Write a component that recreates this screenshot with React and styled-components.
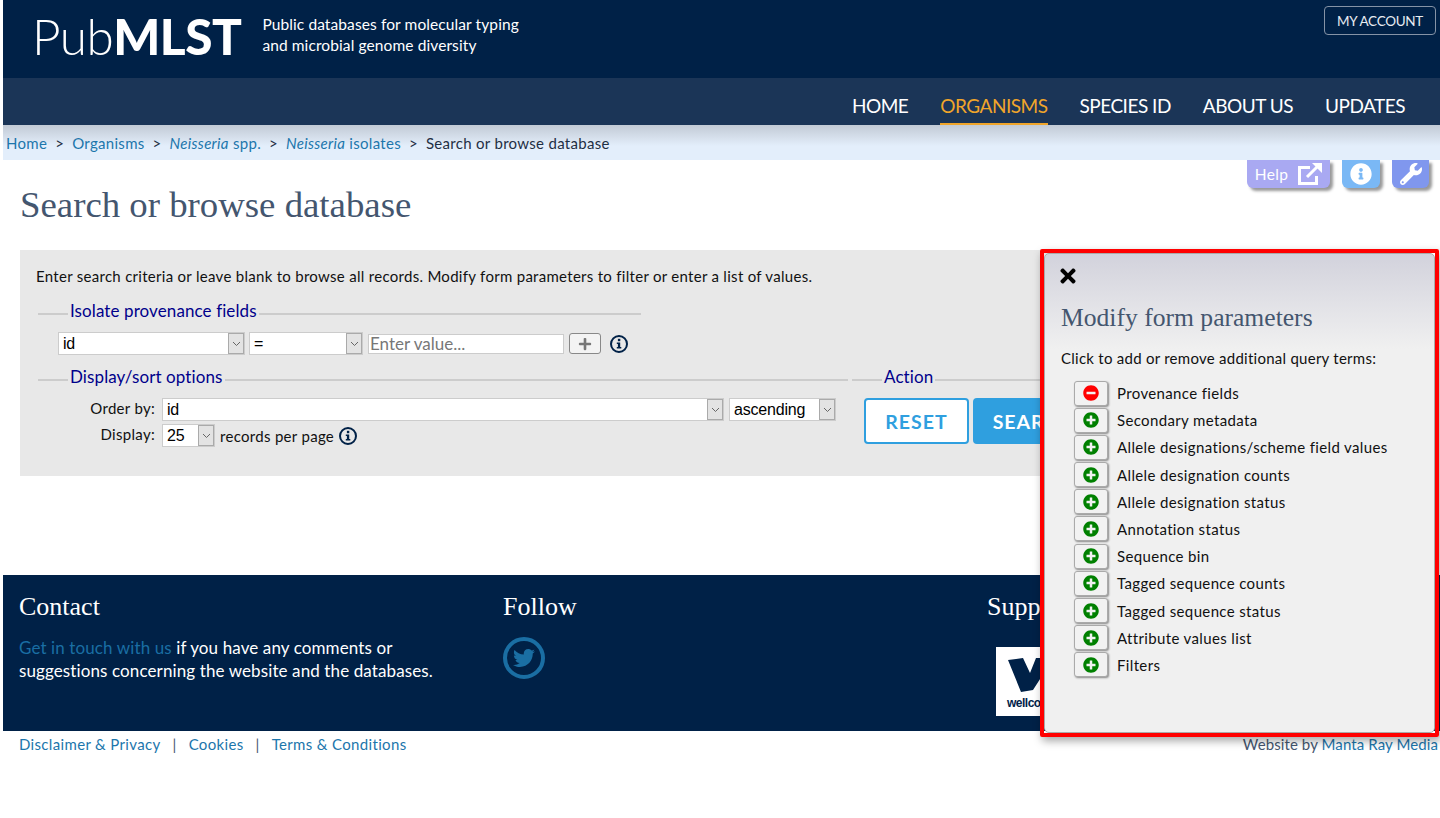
import React from 'react';
import styled, { createGlobalStyle } from 'styled-components';
import { FaInfoCircle, FaWrench, FaPlus, FaPlusCircle, FaMinusCircle, FaTimes, FaTwitter } from 'react-icons/fa';

const sans = `Lato, "Noto Sans", sans-serif`;
const serif = `"Liberation Serif", serif`;

const Global = createGlobalStyle`
  html, body { margin: 0; padding: 0; background: #fff; }
  body { font-family: ${sans}; font-size: 15px; letter-spacing: .3px; color: #111; overflow: hidden; }
  * { box-sizing: border-box; }
  a { text-decoration: none; color: #1c76ac; }
`;

const Page = styled.div`
  position: relative;
  width: 1440px;
  height: 818px;
  overflow: hidden;
  padding-left: 3px;
`;
const Masthead = styled.header`
  height: 78px;
  background: #002147;
  display: flex;
  justify-content: space-between;
  padding: 6px 4px 0 29px;
`;
const Brand = styled.div`
  display: flex;
  align-items: flex-start;
  gap: 21px;
`;
const Logo = styled.div`
  font-size: 49.5px;
  line-height: 60px;
  color: #fff;
  font-weight: 300;
  letter-spacing: -0.5px;
  b { font-weight: 900; letter-spacing: -0.5px; }
`;
const Tagline = styled.div`
  color: #fff;
  font-size: 15.5px;
  letter-spacing: .1px;
  line-height: 21px;
  padding-top: 8px;
`;
const AccountButton = styled.a`
  height: 29px;
  width: 112px;
  border: 1px solid #8593a6;
  border-radius: 4px;
  color: #e8ecf2;
  font-size: 13.5px;
  letter-spacing: -.3px;
  display: flex;
  align-items: center;
  justify-content: center;
`;
const Nav = styled.nav`
  height: 47px;
  background: #1b3557;
  display: flex;
  justify-content: flex-end;
  gap: 32px;
  padding-right: 35px;
`;
const NavItem = styled.a`
  color: ${p => (p.$active ? '#f0a52a' : '#fff')};
  font-size: 19px;
  letter-spacing: -.5px;
  line-height: 35px;
  padding-top: 10px;
  height: 47px;
  border-bottom: 2px solid ${p => (p.$active ? '#f0a52a' : 'transparent')};
`;
const Crumbs = styled.div`
  height: 35px;
  background: linear-gradient(#c2cad5, #e3eefb 60%);
  padding-left: 3px;
  font-size: 15px;
  letter-spacing: .3px;
  line-height: 37px;
  color: #1f2f44;
  display: flex;
  gap: 8px;
  i { font-style: italic; }
`;
const TitleRow = styled.div`
  display: flex;
  justify-content: space-between;
  align-items: flex-start;
  padding: 0 11px 0 17px;
  height: 90px;
`;
const Title = styled.h1`
  font-family: ${serif};
  font-weight: 400;
  font-size: 36.8px;
  letter-spacing: 0;
  line-height: 40px;
  color: #44566f;
  margin: 25px 0 0;
`;
const Tabs = styled.div`
  display: flex;
  gap: 12px;
`;
const Tab = styled.a`
  height: 28px;
  background: ${p => p.$bg};
  color: #fff;
  border-radius: 0 0 6px 6px;
  box-shadow: 3px 3px 3px #999;
  display: flex;
  align-items: center;
  justify-content: center;
  gap: 10px;
  font-size: 15.5px;
  width: ${p => p.$w}px;
`;
const FormBox = styled.section`
  margin: 0 0 0 17px;
  width: 1300px;
  height: 226px;
  background: #e8e8e8;
  padding: 17px 15px 0 16px;
`;
const Intro = styled.p`
  margin: 0 0 16px;
  font-size: 15px;
  letter-spacing: .29px;
  line-height: 18px;
  color: #111;
`;
const Group = styled.fieldset`
  margin: 0;
  padding: 0;
  border: 0;
  border-top: 2px solid #ccc;
  min-width: 0;
  width: ${p => p.$w}px;
  legend {
    margin-left: 30px;
    padding: 0 2px 6px;
    color: #00008b;
    font-size: 17px;
    letter-spacing: .1px;
    line-height: 20px;
  }
`;
const Indent = styled.div`
  display: flex;
  align-items: center;
  gap: 4px;
  padding: 5px 0 12px 20px;
  height: 40px;
`;
const FieldRow = styled.div`
  display: flex;
  gap: 4px;
  margin-left: 2px;
`;
const SelectBox = styled.div`
  width: ${p => p.$w}px;
  height: 23px;
  background: #fff;
  border: 1px solid #ccc;
  display: flex;
  justify-content: space-between;
  font-family: "Liberation Sans", sans-serif;
  font-size: 16px;
  letter-spacing: -.2px;
  line-height: 21px;
  padding-left: 4px;
  color: #000;
`;
const SelectArrow = styled.span`
  width: 16px;
  height: 21px;
  border: 1px solid #aaa;
  background: #e3e3e3;
  display: flex;
  align-items: center;
  justify-content: center;
`;
const Chevron = () => (
  <svg width="9" height="6" viewBox="0 0 9 6"><path d="M1 1l3.5 3.5L8 1" fill="none" stroke="#666" strokeWidth="1" /></svg>
);
const Select = ({ w, children }) => (
  <SelectBox $w={w}>
    {children}
    <SelectArrow><Chevron /></SelectArrow>
  </SelectBox>
);
const ValueInput = styled.input`
  width: 196px;
  height: 20px;
  margin-left: 1px;
  border: 1px solid #ccc;
  background: #fff;
  padding: 0 1px;
  font-family: ${sans};
  font-size: 17px;
  letter-spacing: 0;
  &::placeholder { color: #777; opacity: 1; }
`;
const AddButton = styled.span`
  width: 32px;
  height: 21px;
  margin-left: 1px;
  background: #f3f3f3;
  border: 1px solid #888;
  border-radius: 3px;
  display: flex;
  align-items: center;
  justify-content: center;
  color: #777;
  font-size: 14px;
`;
const InfoMark = styled.span`
  display: inline-flex;
  margin-left: ${p => p.$ml || 0}px;
`;
const Info = ({ ml }) => (
  <InfoMark $ml={ml}>
    <svg width="18" height="18" viewBox="0 0 18 18">
      <circle cx="9" cy="9" r="8" fill="none" stroke="#002147" strokeWidth="2" />
      <rect x="7.9" y="3.8" width="2.4" height="2.4" fill="#002147" />
      <path d="M6.8 7.4h3.4v4.7h1.1v1.5H6.8v-1.5h1.1V8.9H6.8z" fill="#002147" />
    </svg>
  </InfoMark>
);
const OptionGrid = styled.div`
  display: grid;
  grid-template-columns: 115px auto;
  column-gap: 7px;
  row-gap: 3px;
  padding-top: 5px;
  margin-left: 2px;
`;
const OptLabel = styled.label`
  text-align: right;
  line-height: 20px;
  font-size: 15px;
`;
const OptRow = styled.div`
  display: flex;
  align-items: center;
  gap: 5px;
  font-size: 15px;
`;
const Actions = styled.div`
  display: flex;
  gap: 4px;
  padding: 5px 0 0 12px;
`;
const ActionButton = styled.span`
  height: 46px;
  width: ${p => p.$w}px;
  flex: none;
  border: 2px solid #2f9fdf;
  border-radius: 4px;
  background: ${p => (p.$fill ? '#2f9fdf' : '#fff')};
  color: ${p => (p.$fill ? '#fff' : '#2f9fdf')};
  font-size: 19.5px;
  font-weight: 700;
  letter-spacing: 1px;
  display: flex;
  align-items: center;
  justify-content: center;
`;
const Footer = styled.footer`
  margin-top: 99px;
  height: 156px;
  background: #002147;
  color: #fff;
  display: grid;
  grid-template-columns: 484px 484px 1fr;
  padding: 17px 0 0 16px;
`;
const FootHead = styled.h2`
  font-family: ${serif};
  font-weight: 400;
  font-size: 26px;
  letter-spacing: 0;
  line-height: 30px;
  margin: 0 0 14px;
  color: #fff;
`;
const FootText = styled.p`
  margin: 0;
  font-size: 17px;
  letter-spacing: .11px;
  line-height: 23px;
  a { color: #1a6ea3; }
`;
const TwitterRing = styled.a`
  width: 42px;
  height: 42px;
  margin-top: 15px;
  border: 4px solid #1a6ea3;
  border-radius: 50%;
  display: flex;
  align-items: center;
  justify-content: center;
  color: #1a6ea3;
  font-size: 22px;
`;
const Wellcome = styled.div`
  width: 100px;
  height: 69px;
  margin: 25px 0 0 9px;
  background: #fff;
  color: #002147;
  padding: 11px 0 0 11px;
  font-family: "Liberation Sans", sans-serif;
  font-size: 12px;
  font-weight: 700;
  letter-spacing: -0.5px;
  line-height: 12px;
  svg { display: block; margin-bottom: 5px; }
`;
const Legal = styled.div`
  display: flex;
  justify-content: space-between;
  padding: 4px 2px 0 16px;
  font-size: 15px;
  letter-spacing: .34px;
  line-height: 18px;
  color: #44566f;
`;
const LegalLinks = styled.div`
  display: flex;
  gap: 12px;
`;
const Credit = styled.span`
  letter-spacing: .1px;
`;
const Drawer = styled.aside`
  position: absolute;
  left: 1040px;
  top: 249px;
  width: 399px;
  height: 488px;
  border: 4px solid #f00;
  box-shadow: 2px 4px 8px rgba(0,0,0,.35);
  border-radius: 2px;
`;
const DrawerInner = styled.div`
  height: 100%;
  background: linear-gradient(#d2d2dc, #f0f0f0 95px);
  border: 1px solid #aaa;
  border-radius: 5px;
  padding: 13px 16px 0 16px;
`;
const CloseX = styled.span`
  display: flex;
  align-items: center;
  height: 18px;
  margin-left: -4px;
  font-size: 22px;
  color: #000;
`;
const DrawerTitle = styled.h2`
  font-family: ${serif};
  font-weight: 400;
  font-size: 25.6px;
  letter-spacing: 0;
  line-height: 30px;
  color: #44566f;
  margin: 18px 0 16px;
`;
const DrawerIntro = styled.p`
  margin: 0 0 13.5px;
  font-size: 15px;
  letter-spacing: .26px;
  line-height: 18px;
`;
const TermList = styled.ul`
  list-style: none;
  margin: 0;
  padding: 0 0 0 13px;
  display: flex;
  flex-direction: column;
  gap: 2.2px;
`;
const Term = styled.li`
  display: flex;
  align-items: center;
  gap: 9px;
  height: 25px;
  font-size: 15px;
  letter-spacing: .36px;
`;
const TermButton = styled.span`
  width: 34px;
  height: 25px;
  background: #f2f2f2;
  border: 1px solid #aaa;
  border-radius: 3px;
  box-shadow: 1px 1px 2px #888;
  display: flex;
  align-items: center;
  justify-content: center;
  font-size: 16px;
  color: ${p => p.$color};
`;

const terms = ['Secondary metadata', 'Allele designations/scheme field values', 'Allele designation counts', 'Allele designation status', 'Annotation status', 'Sequence bin', 'Tagged sequence counts', 'Tagged sequence status', 'Attribute values list', 'Filters'];

export default function App() {
  return (
    <Page>
      <Global />
      <Masthead>
        <Brand>
          <Logo>Pub<b>MLST</b></Logo>
          <Tagline>Public databases for molecular typing<br />and microbial genome diversity</Tagline>
        </Brand>
        <AccountButton>MY ACCOUNT</AccountButton>
      </Masthead>
      <Nav>
        <NavItem>HOME</NavItem>
        <NavItem $active>ORGANISMS</NavItem>
        <NavItem>SPECIES ID</NavItem>
        <NavItem>ABOUT US</NavItem>
        <NavItem>UPDATES</NavItem>
      </Nav>
      <Crumbs>
        <a>Home</a><span>&gt;</span>
        <a>Organisms</a><span>&gt;</span>
        <a><i>Neisseria</i> spp.</a><span>&gt;</span>
        <a><i>Neisseria</i> isolates</a><span>&gt;</span>
        <span>Search or browse database</span>
      </Crumbs>
      <TitleRow>
        <Title>Search or browse database</Title>
        <Tabs>
          <Tab $bg="#a9a9f2" $w={83}>Help
            <svg width="24" height="22" viewBox="0 0 24 22" fill="none" stroke="#fff" strokeWidth="3">
              <path d="M18.5 13v7.5h-17v-16H12" />
              <path d="M9 14L20 3" />
              <path d="M14 0H24V10z" fill="#fff" stroke="none" />
            </svg>
          </Tab>
          <Tab $bg="#7ab8f5" $w={38}><FaInfoCircle size={22} /></Tab>
          <Tab $bg="#8097ee" $w={37}><FaWrench size={22} /></Tab>
        </Tabs>
      </TitleRow>
      <FormBox>
        <Intro>Enter search criteria or leave blank to browse all records. Modify form parameters to filter or enter a list of values.</Intro>
        <FieldRow>
          <Group $w={603}>
            <legend>Isolate provenance fields</legend>
            <Indent>
              <Select w={187}>id</Select>
              <Select w={114}>=</Select>
              <ValueInput placeholder="Enter value..." readOnly />
              <AddButton><FaPlus /></AddButton>
              <Info ml={5} />
            </Indent>
          </Group>
        </FieldRow>
        <FieldRow>
          <Group $w={810}>
            <legend>Display/sort options</legend>
            <OptionGrid>
              <OptLabel>Order by:</OptLabel>
              <OptRow>
                <Select w={562}>id</Select>
                <Select w={107}>ascending</Select>
              </OptRow>
              <OptLabel>Display:</OptLabel>
              <OptRow>
                <Select w={53}>25</Select>
                <span>records per page</span>
                <Info />
              </OptRow>
            </OptionGrid>
          </Group>
          <Group $w={300}>
            <legend>Action</legend>
            <Actions>
              <ActionButton $w={105}>RESET</ActionButton>
              <ActionButton $fill $w={121}>SEARCH</ActionButton>
            </Actions>
          </Group>
        </FieldRow>
      </FormBox>
      <Footer>
        <div>
          <FootHead>Contact</FootHead>
          <FootText><a>Get in touch with us</a> if you have any comments or<br />suggestions concerning the website and the databases.</FootText>
        </div>
        <div>
          <FootHead>Follow</FootHead>
          <TwitterRing><FaTwitter /></TwitterRing>
        </div>
        <div>
          <FootHead>Support</FootHead>
          <Wellcome>
            <svg width="72" height="34" viewBox="0 0 72 34"><path d="M1 2L16 0L23 15L29 0H40L46 15L54 0L70 2L56 34L44 32L35 18L26 32L14 34Z" fill="#002147" /></svg>
            wellcome
          </Wellcome>
        </div>
      </Footer>
      <Legal>
        <LegalLinks>
          <a>Disclaimer &amp; Privacy</a><span>|</span><a>Cookies</a><span>|</span><a>Terms &amp; Conditions</a>
        </LegalLinks>
        <Credit>Website by <a>Manta Ray Media</a></Credit>
      </Legal>
      <Drawer>
        <DrawerInner>
          <CloseX><FaTimes /></CloseX>
          <DrawerTitle>Modify form parameters</DrawerTitle>
          <DrawerIntro>Click to add or remove additional query terms:</DrawerIntro>
          <TermList>
            <Term><TermButton $color="#f00"><FaMinusCircle /></TermButton>Provenance fields</Term>
            {terms.map(t => (
              <Term key={t}><TermButton $color="#008000"><FaPlusCircle /></TermButton>{t}</Term>
            ))}
          </TermList>
        </DrawerInner>
      </Drawer>
    </Page>
  );
}
